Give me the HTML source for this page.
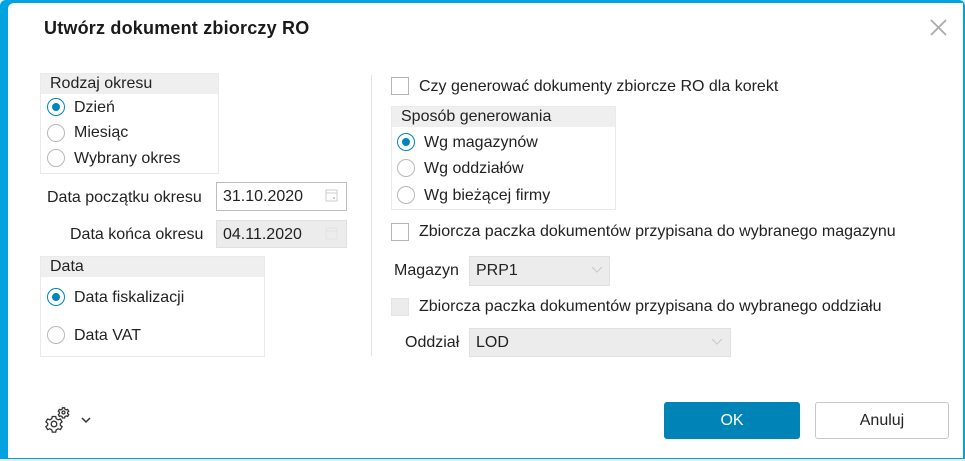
<!DOCTYPE html>
<html><head><meta charset="utf-8"><style>
*{box-sizing:border-box;margin:0;padding:0}
body{width:965px;height:461px;background:#dfeef4;font-family:"Liberation Sans",sans-serif;font-size:16px;color:#222;position:relative;overflow:hidden}
.frame{position:absolute;left:0;top:0;width:965px;height:459px;background:#00a3e0;border-radius:6px 6px 0 0}
.dlg{position:absolute;left:8px;top:3px;width:955px;height:455px;background:#fff;border-radius:6px 0 0 0}
.a{position:absolute;white-space:nowrap;line-height:19px;top:0}
.grp{position:absolute;border:1px solid #eaeaea;background:#fff}
.grp .h{background:#efefef;height:20px;line-height:20px;padding-left:9px}
.r{position:absolute;width:18px;height:18px;border:1.5px solid #b8b8b8;border-radius:50%;background:#fff}
.r.on{border-color:#0085bd}
.r.on::after{content:"";position:absolute;left:3.5px;top:3.5px;width:8px;height:8px;border-radius:50%;background:#0085bd}
.cb{position:absolute;width:18px;height:18px;border:1px solid #b5b5b5;background:#fff}
.in{position:absolute;border:1px solid #bdbdbd;background:#fff;padding-left:6px;line-height:28px}
.in.d{background:#ececec;border-color:#e0e0e0}
.btn{position:absolute;border-radius:3px;text-align:center;line-height:38px;font-size:16px}
</style></head><body>
<div class="frame"></div>
<div class="dlg"></div>
<div class="a" style="left:44px;top:19px;font-size:18px;font-weight:bold;color:#1a1a1a;letter-spacing:0.2px">Utwórz dokument zbiorczy RO</div>
<svg style="position:absolute;left:930px;top:19px" width="17" height="17"><path d="M1 1L16 16M16 1L1 16" stroke="#aaa" stroke-width="1.8"/></svg>

<div class="grp" style="left:40px;top:73px;width:179px;height:101px"><div class="h">Rodzaj okresu</div></div>
<div class="r on" style="left:47px;top:98px"></div><div class="a" style="left:74px;top:98px">Dzień</div>
<div class="r" style="left:47px;top:124px"></div><div class="a" style="left:74px;top:123px">Miesiąc</div>
<div class="r" style="left:47px;top:149px"></div><div class="a" style="left:74px;top:149px">Wybrany okres</div>

<div class="a" style="left:47px;top:188px">Data początku okresu</div>
<div class="in" style="left:216px;top:182px;width:131px;height:29px">31.10.2020</div>
<svg style="position:absolute;left:325px;top:188px" width="13" height="14"><rect x="1" y="2" width="11" height="11" fill="none" stroke="#ccc"/><line x1="1" y1="5" x2="12" y2="5" stroke="#ccc"/><rect x="8" y="9" width="2" height="2" fill="#ccc"/></svg>
<div class="a" style="left:70px;top:225px">Data końca okresu</div>
<div class="in d" style="left:216px;top:220px;width:131px;height:28px;line-height:27px">04.11.2020</div>
<svg style="position:absolute;left:325px;top:226px" width="13" height="14"><rect x="1" y="2" width="11" height="11" fill="none" stroke="#e2e2e2"/><line x1="1" y1="5" x2="12" y2="5" stroke="#e2e2e2"/></svg>

<div class="grp" style="left:40px;top:256px;width:225px;height:101px"><div class="h">Data</div></div>
<div class="r on" style="left:47px;top:288px"></div><div class="a" style="left:74px;top:288px">Data fiskalizacji</div>
<div class="r" style="left:47px;top:326px"></div><div class="a" style="left:74px;top:326px">Data VAT</div>

<div style="position:absolute;left:371px;top:75px;width:1px;height:281px;background:#e2e2e2"></div>

<div class="cb" style="left:391px;top:77px"></div><div class="a" style="left:419px;top:77px">Czy generować dokumenty zbiorcze RO dla korekt</div>
<div class="grp" style="left:391px;top:106px;width:225px;height:104px"><div class="h">Sposób generowania</div></div>
<div class="r on" style="left:397px;top:133px"></div><div class="a" style="left:424px;top:133px">Wg magazynów</div>
<div class="r" style="left:397px;top:159px"></div><div class="a" style="left:424px;top:159px">Wg oddziałów</div>
<div class="r" style="left:397px;top:186px"></div><div class="a" style="left:424px;top:186px">Wg bieżącej firmy</div>

<div class="cb" style="left:391px;top:223px"></div><div class="a" style="left:419px;top:222px">Zbiorcza paczka dokumentów przypisana do wybranego magazynu</div>
<div class="a" style="left:394px;top:261px">Magazyn</div>
<div class="in d" style="left:469px;top:256px;width:141px;height:30px;line-height:28px">PRP1</div>
<svg style="position:absolute;left:591px;top:266px" width="12" height="8"><path d="M1 1L6 6L11 1" fill="none" stroke="#c8c8c8"/></svg>
<div class="cb" style="left:391px;top:298px;background:#ececec;border-color:#e4e4e4"></div><div class="a" style="left:419px;top:297px">Zbiorcza paczka dokumentów przypisana do wybranego oddziału</div>
<div class="a" style="left:405px;top:333px">Oddział</div>
<div class="in d" style="left:469px;top:328px;width:262px;height:29px;line-height:27px">LOD</div>
<svg style="position:absolute;left:711px;top:338px" width="12" height="8"><path d="M1 1L6 6L11 1" fill="none" stroke="#c8c8c8"/></svg>

<svg style="position:absolute;left:43px;top:406px" width="28" height="28" viewBox="0 0 28 28"><g fill="none" stroke="#333" stroke-width="1.3"><circle cx="11" cy="18" r="2.8"/><path d="M9.3 10.5h3.4l.5 2.2 2 1.1 2.2-.8 1.7 2.9-1.8 1.5v1.8l1.8 1.5-1.7 2.9-2.2-.8-2 1.1-.5 2.2h-3.4l-.5-2.2-2-1.1-2.2.8-1.7-2.9 1.8-1.5v-1.8l-1.8-1.5 1.7-2.9 2.2.8 2-1.1z"/><circle cx="20.5" cy="6.5" r="1.5"/><path d="M19.4 1.8h2.2l.3 1.4 1.3.7 1.4-.5 1.1 1.8-1.1 1v1.4l1.1 1-1.1 1.8-1.4-.5-1.3.7-.3 1.4h-2.2l-.3-1.4-1.3-.7-1.4.5-1.1-1.8 1.1-1v-1.4l-1.1-1 1.1-1.8 1.4.5 1.3-.7z"/></g></svg>
<svg style="position:absolute;left:81px;top:417px" width="10" height="7"><path d="M1 1L5 5L9 1" fill="none" stroke="#333" stroke-width="1.5"/></svg>

<div class="btn" style="left:664px;top:402px;width:136px;height:37px;background:#0083b7;color:#fff">OK</div>
<div class="btn" style="left:815px;top:402px;width:134px;height:37px;border:1px solid #c8c8c8;background:#fff;color:#222;line-height:36px">Anuluj</div>
</body></html>
